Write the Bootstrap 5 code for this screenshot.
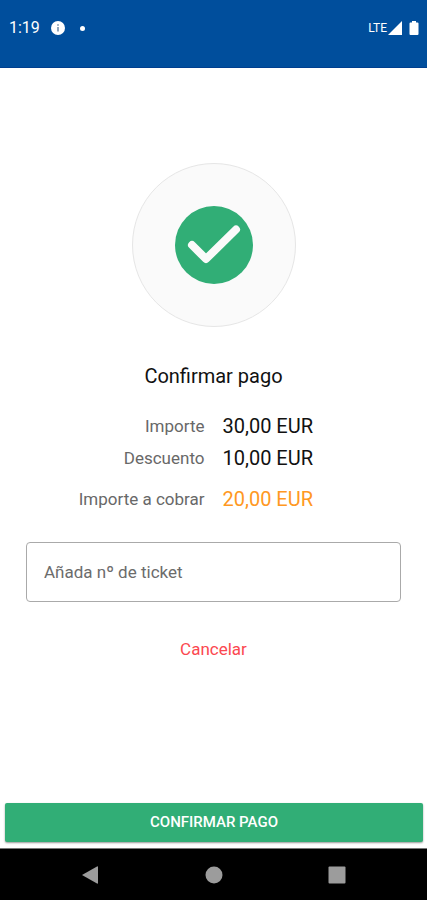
<!DOCTYPE html>
<html lang="es">
<head>
<meta charset="utf-8">
<meta name="viewport" content="width=device-width, initial-scale=1">
<title>Confirmar pago</title>
<link href="https://cdn.jsdelivr.net/npm/bootstrap@5.3.0/dist/css/bootstrap.min.css" rel="stylesheet">
<style>
  body { font-family: Roboto, "Liberation Sans", sans-serif; color: #111; }
  .status-bar { background: #004e9c; border-bottom: 1px solid #003f8f; padding: 16px 7px 27px 9px; font-size: 16px; line-height: 24px; }
  .status-net { font-size: 12px; }
  .status-dot { width: 5px; height: 5px; }
  .status-notes { gap: 11px; }
  .confirm-main { padding: 95px 26px 0; }
  .badge-ring { width: 164px; height: 164px; background: #fafafa; border: 1px solid #e6e6e6; }
  .confirm-title { font-size: 20px; line-height: 24px; margin: 37px 0 0; }
  .amounts { margin: 22px 0 0; line-height: 32px; }
  .amounts dt, .amounts dd { padding: 0 9px; margin: 0; }
  .amounts dt { font-size: 17px; font-weight: 400; color: #686868; }
  .amounts dd { font-size: 20px; }
  .amounts .amount-total { margin-top: 9px; }
  .amounts dd.amount-total { color: #ff9822; }
  .ticket-field { margin-top: 27px; height: 60px; padding: 0 17px; border: 1px solid #aaa; border-radius: 4px; font-size: 17px; }
  .ticket-field::placeholder { color: #6c6c6c; opacity: 1; }
  .cancel-btn { margin-top: 31px; font-size: 17px; line-height: 24px; color: #fb4850; padding: 4px 12px; border: 0; }
  .confirm-bar { padding: 0 4px 6px 5px; }
  .confirm-btn { background: #31ae76; color: #fff; height: 39px; border: 0; border-radius: 2px; font-size: 15px; font-weight: 500; padding: 0; box-shadow: 0 1px 2px rgba(0,0,0,.4); }
  .system-nav { background: #000; border-top: 1px solid #777; padding: 0 28px; height: 52px; }
</style>
<script src="https://cdn.jsdelivr.net/npm/bootstrap@5.3.0/dist/js/bootstrap.bundle.min.js" defer></script>
</head>
<body class="d-flex flex-column min-vh-100 bg-white">
  <header class="status-bar d-flex justify-content-between align-items-center text-white">
    <div class="status-notes d-flex align-items-center">
      <span>1:19</span>
      <svg width="14" height="14" viewBox="0 0 14 14" aria-hidden="true"><circle cx="7" cy="7" r="7" fill="#fff"/><path d="M6 3.2h2v1.6H6zM6 6h2v4.6H6z" fill="#8fa5bd"/></svg>
      <span class="status-dot rounded-circle bg-white ms-1"></span>
    </div>
    <div class="d-flex align-items-center">
      <span class="status-net">LTE</span>
      <svg width="33" height="16" viewBox="0 0 33 16" fill="#fff" aria-hidden="true"><path d="M1 15 15 1v14z"/><path d="M25 1h4v1.500h1.500q1 0 1 1V14q0 1-1 1h-7q-1 0-1-1V3.500q0-1 1-1H25z"/></svg>
    </div>
  </header>

  <main class="confirm-main flex-grow-1 d-flex flex-column align-items-center">
    <div class="badge-ring rounded-circle d-flex align-items-center justify-content-center">
      <svg width="78" height="78" viewBox="0 0 78 78" role="img" aria-label="Correcto"><circle cx="39" cy="39" r="39" fill="#31ae76"/><path d="M17 39 31 53 61 23.500" fill="none" stroke="#fafafa" stroke-width="8" stroke-linecap="round" stroke-linejoin="round"/></svg>
    </div>
    <h1 class="confirm-title fw-normal text-center">Confirmar pago</h1>
    <dl class="amounts row gx-0 w-100">
      <dt class="col-6 text-end">Importe</dt><dd class="col-6">30,00 EUR</dd>
      <dt class="col-6 text-end">Descuento</dt><dd class="col-6">10,00 EUR</dd>
      <dt class="col-6 text-end amount-total">Importe a cobrar</dt><dd class="col-6 amount-total">20,00 EUR</dd>
    </dl>
    <input type="text" class="ticket-field form-control" placeholder="Añada nº de ticket" aria-label="Añada nº de ticket">
    <button type="button" class="cancel-btn btn">Cancelar</button>
  </main>

  <div class="confirm-bar">
    <button type="button" class="confirm-btn btn w-100 text-uppercase">Confirmar pago</button>
  </div>
  <nav class="system-nav d-flex align-items-center" aria-label="Sistema">
    <button type="button" class="btn border-0 p-0 flex-fill" aria-label="Atrás"><svg width="18" height="20" viewBox="0 0 18 20"><path d="M1 10 16 1.500Q17 1 17 2v16q0 1-1 .5z" fill="#9c9c9c"/></svg></button>
    <button type="button" class="btn border-0 p-0 flex-fill" aria-label="Inicio"><svg width="18" height="18" viewBox="0 0 18 18"><circle cx="9" cy="9" r="8.500" fill="#9c9c9c"/></svg></button>
    <button type="button" class="btn border-0 p-0 flex-fill" aria-label="Recientes"><svg width="18" height="18" viewBox="0 0 18 18"><rect x=".5" y=".5" width="17" height="17" rx="1" fill="#9c9c9c"/></svg></button>
  </nav>
</body>
</html>
